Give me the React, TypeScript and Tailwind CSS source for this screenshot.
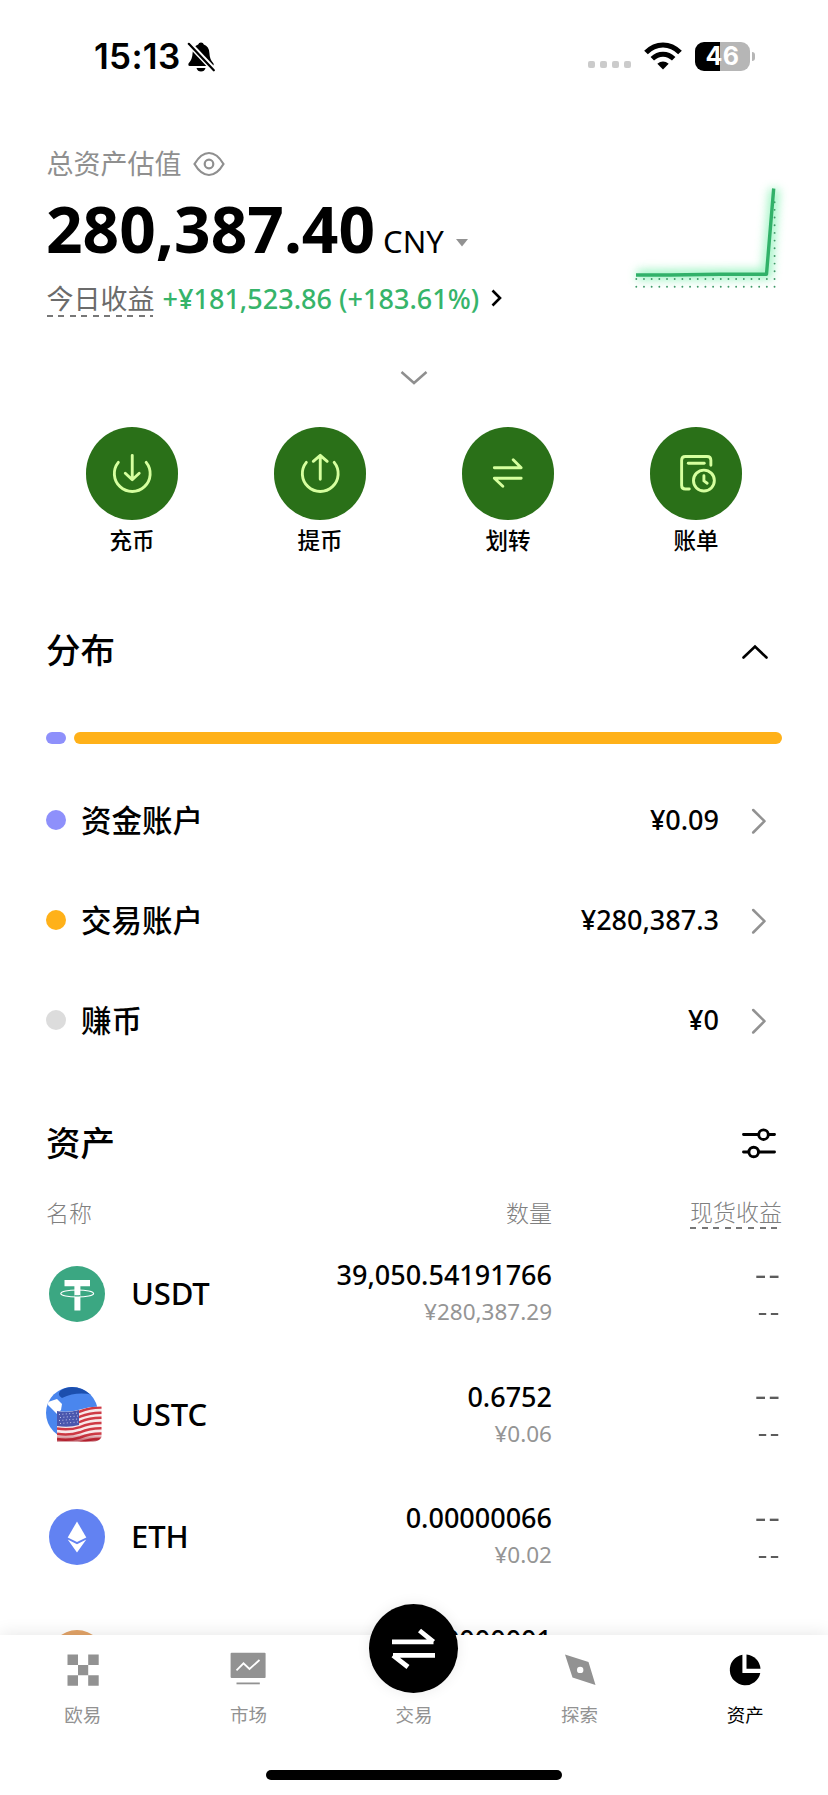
import React from 'react';

interface Account {
  name: string;
  value: string;
  dot: string;
}

interface Asset {
  symbol: string;
  amount: string;
  fiat: string;
  icon: React.ReactNode;
}

const UsdtIcon = () => (
  <svg viewBox="0 0 56 56" className="w-14 h-14">
    <circle cx="28" cy="28" r="28" fill="#3ba782" />
    <path d="M15.5 14H41V20.2H31.4V44.5H25.4V20.2H15.5Z" fill="#fff" />
    <ellipse cx="28.2" cy="27.5" rx="16.4" ry="3.5" fill="none" stroke="#fff" strokeWidth="1.2" />
    <path d="M25.4 29.6Q28.2 30 31.4 29.6" stroke="#3ba782" strokeWidth="1.3" fill="none" />
  </svg>
);

const UstcIcon = () => (
  <svg viewBox="0 0 56 56" className="w-14 h-14 -ml-[2px] -mt-px overflow-visible">
    <defs>
      <clipPath id="globe">
        <circle cx="25" cy="26" r="26" />
      </clipPath>
      <clipPath id="flag">
        <path d="M10 24Q22 26 33 22.500Q44 19 54.500 19.500V50Q52 54.500 46 54.500H10Z" />
      </clipPath>
      <linearGradient id="flagShade" x1="0" y1="0" x2="0" y2="1">
        <stop offset="0.75" stopColor="#a01020" stopOpacity="0" />
        <stop offset="1" stopColor="#a01020" stopOpacity="0.85" />
      </linearGradient>
    </defs>
    <g clipPath="url(#globe)">
      <rect x="-2" y="-1" width="56" height="56" fill="#4a86ee" />
      <path d="M13 4Q20 -2 34 0Q42 2 46 8Q30 4 15 11Q10 9 13 4Z" fill="#1c4fae" />
      <path d="M1 15L10 12L15 17L14 23L10 27L6 23L1 18Z" fill="#fff" />
    </g>
    <g clipPath="url(#flag)">
      <rect x="9" y="18" width="47" height="38" fill="#f8e9ea" />
      <g fill="none" stroke="#cf3a45" strokeWidth="2.5">
        <path d="M10 26Q22 28 33 24.500Q44 20 56 20.500" />
        <path d="M10 31.200Q22 33.200 33 29.700Q44 25.200 56 25.700" />
        <path d="M10 36.400Q22 38.400 33 34.900Q44 30.400 56 30.900" />
        <path d="M10 41.600Q22 43.600 33 40.100Q44 35.600 56 36.100" />
        <path d="M10 46.800Q22 48.800 33 45.300Q44 40.800 56 41.300" />
        <path d="M10 52Q22 54 33 50.500Q44 46 56 46.500" />
        <path d="M10 57Q22 59 33 55.700Q44 51.200 56 51.700" />
      </g>
      <path d="M10 24Q22 26 32 23V38Q22 41 10 39Z" fill="#4a57ae" />
      <g stroke="#c3c8ea" strokeWidth="1" strokeDasharray="1 2.400">
        <path d="M12 27.500L31 26" />
        <path d="M13 30.500L31 29" />
        <path d="M12 33.500L31 32" />
        <path d="M13 36.500L31 35" />
      </g>
      <rect x="9" y="18" width="47" height="38" fill="url(#flagShade)" />
    </g>
  </svg>
);

const EthIcon = () => (
  <svg viewBox="0 0 56 56" className="w-14 h-14">
    <circle cx="28" cy="28" r="28" fill="#6282f2" />
    <path d="M28 12.500L37.300 28.500L28 33L18.700 28.500Z" fill="#fff" />
    <path d="M18.700 30.500L28 35.200L37.300 30.500L28 43.500Z" fill="#fff" />
  </svg>
);

const BtcIcon = () => (
  <svg viewBox="0 0 56 56" className="w-14 h-14">
    <circle cx="28" cy="28" r="28" fill="#e3a468" />
  </svg>
);

const accounts: Account[] = [
  { name: '资金账户', value: '¥0.09', dot: 'bg-[#8e90fb]' },
  { name: '交易账户', value: '¥280,387.3', dot: 'bg-[#ffb119]' },
  { name: '赚币', value: '¥0', dot: 'bg-[#dcdcdc]' },
];

const assets: Asset[] = [
  { symbol: 'USDT', amount: '39,050.54191766', fiat: '¥280,387.29', icon: <UsdtIcon /> },
  { symbol: 'USTC', amount: '0.6752', fiat: '¥0.06', icon: <UstcIcon /> },
  { symbol: 'ETH', amount: '0.00000066', fiat: '¥0.02', icon: <EthIcon /> },
  { symbol: 'BTC', amount: '0.00000001', fiat: '¥0.00', icon: <BtcIcon /> },
];

const actions = [
  {
    label: '充币',
    icon: (
      <>
        <path d="M32.500 35.500A18 18 0 1 0 60.500 35.500" />
        <path d="M46.500 28.500V52.500M39.500 46.500L46.500 53L53.500 46.500" />
      </>
    ),
  },
  {
    label: '提币',
    icon: (
      <>
        <path d="M32.500 35.500A18 18 0 1 0 60.500 35.500" />
        <path d="M46.500 52.500V28.500M39.500 34.500L46.500 28.500L53.500 34.500" />
      </>
    ),
  },
  {
    label: '划转',
    icon: <path d="M32.500 41H59.500L51.500 33M59.500 51.500H32.500L41 59.500" />,
  },
  {
    label: '账单',
    icon: (
      <>
        <path d="M61.200 38.500V33.500Q61.200 29.700 57.400 29.700H35.600Q31.800 29.700 31.800 33.500V58.500Q31.800 62.300 35.600 62.300H39.500" />
        <path d="M38.500 36.500H54.500" />
        <circle cx="54.200" cy="53.800" r="10.500" />
        <path d="M54.200 49V54.200L57.500 56.500" />
      </>
    ),
  },
];

const tabs = [
  {
    label: '欧易',
    icon: (
      <path d="M4.500 4.500H15V15H4.500ZM25.200 4.500H35.700V15H25.200ZM15 15H25.200V25.200H15ZM4.500 25.200H15V35.700H4.500ZM25.200 25.200H35.700V35.700H25.200Z" />
    ),
  },
  {
    label: '市场',
    icon: (
      <>
        <rect x="2.600" y="2.700" width="35" height="25.300" rx="1" />
        <path d="M8.500 20.300L15.500 13.300L21.500 19L31.500 10" fill="none" stroke="#fff" strokeWidth="1.800" />
        <rect x="8.500" y="32.500" width="23.300" height="1.800" />
      </>
    ),
  },
  { label: '交易', icon: null },
  {
    label: '探索',
    icon: (
      <path
        fillRule="evenodd"
        d="M5 4.500L28.500 12L35.500 35L12.500 27.500ZM20.200 16.700A3.200 3.200 0 1 0 20.200 23.100A3.200 3.200 0 1 0 20.200 16.700Z"
      />
    ),
  },
  {
    label: '资产',
    active: true,
    icon: (
      <>
        <path d="M17.400 4.700A15.400 15.400 0 1 0 35.300 23H17.400Z" />
        <path d="M21.500 4.500A15.400 15.400 0 0 1 35.500 18.800H21.500Z" />
      </>
    ),
  },
];

const StatusBar = () => (
  <div className="h-[113px] pl-[94px] pr-[73px] flex items-center">
    <span className="font-['Inter'] font-semibold text-[35px] leading-none tracking-[0.3px]">15:13</span>
    <svg viewBox="0 0 28 30" className="w-7 h-[30px] ml-[6px]">
      <path d="M14 0.500Q16.300 0.500 16.800 2.600Q22 4.300 22.400 11Q22.600 17.500 26.500 21.500Q27.400 23.500 25.500 24H2.500Q0.600 23.500 1.500 21.500Q5.400 17.500 5.600 11Q6 4.300 11.200 2.600Q11.700 0.500 14 0.500Z" />
      <path d="M9.500 26H18.500Q17.500 29.500 14 29.500Q10.500 29.500 9.500 26Z" />
      <path d="M2 1.500L27 28" stroke="#fff" strokeWidth="5.500" />
      <path d="M1.800 1.800L26.800 28.300" stroke="#000" strokeWidth="2.200" strokeLinecap="round" />
    </svg>
    <div className="ml-auto mt-4 flex gap-[5px]">
      <span className="w-[7px] h-[7px] rounded-[2px] bg-[#cbcbcb]" />
      <span className="w-[7px] h-[7px] rounded-[2px] bg-[#cbcbcb]" />
      <span className="w-[7px] h-[7px] rounded-[2px] bg-[#cbcbcb]" />
      <span className="w-[7px] h-[7px] rounded-[2px] bg-[#cbcbcb]" />
    </div>
    <svg viewBox="0 0 38 28" className="w-[38px] h-7 ml-[13px] mb-px">
      <path d="M2 10.500Q9.500 3 19 3Q28.500 3 36 10.500" fill="none" stroke="#000" strokeWidth="5.200" />
      <path d="M8.300 16.800Q13 12.300 19 12.300Q25 12.300 29.700 16.800" fill="none" stroke="#000" strokeWidth="5" />
      <path d="M13.300 21.800Q19 17 24.700 21.800L19 27.500Z" />
    </svg>
    <div className="ml-[13px] mb-px w-[55px] h-[29px] rounded-[9px] bg-[linear-gradient(90deg,#000_46%,#b6b6b6_46%)] flex items-center justify-center font-['Inter'] font-bold text-[25px] leading-none tracking-[0.5px] text-white">
      46
    </div>
    <span className="ml-[2px] w-[3px] h-[9px] rounded-r-full bg-[#b6b6b6]" />
  </div>
);

const TrendChart = () => (
  <svg viewBox="0 0 180 120" className="w-[180px] h-[120px] mt-[31px] -mr-2 shrink-0 overflow-visible">
    <defs>
      <filter id="glow" x="-20%" y="-20%" width="140%" height="140%">
        <feGaussianBlur stdDeviation="5" />
      </filter>
    </defs>
    <path d="M27 99L157 98L164.500 13" fill="none" stroke="#7df0ae" strokeWidth="10" opacity="0.75" filter="url(#glow)" />
    <g stroke="#3f9a68" strokeWidth="1.900" strokeLinecap="round" strokeDasharray="0 7.680">
      <path d="M26.300 103H165" />
      <path d="M26.300 110.700H165" />
      <path d="M164.600 95.300V22" />
    </g>
    <path d="M26 99L60 99L110 98.300L156.500 98.200L163.700 12.500" fill="none" stroke="#31b169" strokeWidth="3.400" strokeLinejoin="round" />
  </svg>
);

const ChevronRight = () => (
  <svg viewBox="0 0 16 28" className="w-4 h-7 ml-8 mr-[15px] mt-[2px]" fill="none" stroke="#929292" strokeWidth="2.500" strokeLinecap="round" strokeLinejoin="round">
    <path d="M2.200 3L13.500 14.200L2.200 25.500" />
  </svg>
);

const TabBar = () => (
  <nav className="absolute inset-x-0 bottom-0 h-40 bg-white shadow-[0_-2px_16px_rgba(0,0,0,0.09)]">
    <div className="grid grid-cols-5">
      {tabs.map((tab) => (
        <div
          key={tab.label}
          className={
            tab.active
              ? 'flex flex-col items-center text-black'
              : 'flex flex-col items-center text-[#929292]'
          }
        >
          {tab.icon ? (
            <svg viewBox="0 0 40 40" className="w-10 h-10 mt-[15px]" fill="currentColor">
              {tab.icon}
            </svg>
          ) : (
            <div className="w-[89px] h-[89px] -mt-[31px] -mb-[3px] rounded-full bg-black shadow-[0_0_14px_rgba(0,0,0,0.08)]">
              <svg viewBox="0 0 89 89" className="w-full h-full" fill="none" stroke="#fff" strokeWidth="4.800" strokeLinejoin="bevel">
                <path d="M23 37.800H64.500M64.500 37.800L50.500 26.500" />
                <path d="M66 51.300H24M24 51.300L39 63" />
              </svg>
            </div>
          )}
          <span className="mt-[15px] text-[18.500px] leading-[20px]">{tab.label}</span>
        </div>
      ))}
    </div>
    <div className="mx-auto mt-[45px] w-[296px] h-[10px] rounded-full bg-black" />
  </nav>
);

export default function App() {
  return (
    <div className="relative w-[828px] h-[1795px] overflow-hidden bg-white text-black font-['Noto_Sans','Noto_Sans_CJK_SC',sans-serif]">
      <StatusBar />

      {/* Balance summary */}
      <section className="px-[46px] pt-8 flex justify-between">
        <div>
          <div className="h-9 flex items-center text-[#8f8f8f]">
            <span className="ml-[0.5px] text-[27px] leading-none">总资产估值</span>
            <svg viewBox="0 0 32 26" className="w-8 h-[26px] ml-[11px] mt-px" fill="none" stroke="currentColor" strokeWidth="2.200">
              <path d="M1.500 13Q8 2 16 2Q24 2 30.500 13Q24 24 16 24Q8 24 1.500 13Z" />
              <circle cx="16" cy="13" r="4.300" />
            </svg>
          </div>
          <div className="h-[97px] flex items-center">
            <span className="-mt-[2px] font-bold text-[64px] leading-none">280,387.40</span>
            <span className="ml-2 mt-6 text-[31px] leading-none">CNY</span>
            <svg viewBox="0 0 12 8" className="w-3 h-2 ml-3 mt-[26px]">
              <path d="M0 0H12L6 7.500Z" fill="#929292" />
            </svg>
          </div>
          <div className="h-[42px] -mt-px mb-px flex items-center">
            <span className="relative ml-[0.5px] text-[27px] leading-none text-[#6b6b6b]">
              今日收益
              <span className="absolute left-0 -bottom-[5px] w-[106px] h-[2px] bg-[repeating-linear-gradient(90deg,#777_0_6px,transparent_6px_11.500px)]" />
            </span>
            <span className="ml-2 text-[27px] leading-none font-medium tracking-[0.03px] text-[#36b46a]">+¥181,523.86 (+183.61%)</span>
            <svg viewBox="0 0 11 18" className="w-[11px] h-[18px] ml-[12px]" fill="none" stroke="#000" strokeWidth="2.600">
              <path d="M1.500 1.500L9 9L1.500 16.500" />
            </svg>
          </div>
        </div>
        <TrendChart />
      </section>

      <div className="h-[107px] pt-[50px] flex justify-center">
        <svg viewBox="0 0 28 16" className="w-7 h-4" fill="none" stroke="#8f8f8f" strokeWidth="2.500">
          <path d="M1.500 2L14 13L26.500 2" />
        </svg>
      </div>

      {/* Quick actions */}
      <section className="px-[38px] grid grid-cols-4">
        {actions.map((action) => (
          <div key={action.label} className="flex flex-col items-center">
            <div className="w-[92.5px] h-[92.5px] rounded-full bg-[#2a7018]">
              <svg viewBox="0 0 93 93" className="w-full h-full" fill="none" stroke="#d6ff9f" strokeWidth="2.900" strokeLinecap="round" strokeLinejoin="round">
                {action.icon}
              </svg>
            </div>
            <span className="h-[42.5px] flex items-center text-[22.500px] leading-none font-medium">{action.label}</span>
          </div>
        ))}
      </section>

      {/* Distribution */}
      <section className="px-[46px] mt-[60px]">
        <div className="h-14 flex items-center justify-between">
          <h2 className="text-[34.5px] leading-none font-medium">分布</h2>
          <svg viewBox="0 0 28 16" className="w-7 h-4 mr-[13px] mt-[4px]" fill="none" stroke="#000" strokeWidth="2.600" strokeLinecap="round">
            <path d="M2.500 13.500L14 2.500L25.500 13.500" />
          </svg>
        </div>
        <div className="mt-[54px] flex gap-2">
          <span className="w-5 h-[12px] rounded-full bg-[#8e90fb]" />
          <span className="flex-1 h-[12px] rounded-full bg-[#ffb119]" />
        </div>
        <div className="mt-[26px]">
          {accounts.map((account) => (
            <div key={account.name} className="h-[100px] flex items-center">
              <span className={`w-5 h-5 rounded-full ${account.dot}`} />
              <span className="ml-[15px] text-[30.500px] leading-none font-medium">{account.name}</span>
              <span className="ml-auto -mt-[2px] text-[27px] leading-none font-medium">{account.value}</span>
              <ChevronRight />
            </div>
          ))}
        </div>
      </section>

      {/* Assets */}
      <section className="px-[46px] mt-[45px]">
        <div className="h-14 flex items-center justify-between">
          <h2 className="text-[34.5px] leading-none font-medium">资产</h2>
          <svg viewBox="0 0 34 32" className="w-[34px] h-8 mr-[6px]" fill="#fff" stroke="#000" strokeWidth="2.900" strokeLinecap="round">
            <path d="M1.500 7.500H32.500M1.500 25H32.500" />
            <circle cx="21.500" cy="7.700" r="4.800" />
            <circle cx="11.700" cy="25" r="4.800" />
          </svg>
        </div>
        <div className="h-[62px] pt-[22px] flex items-center text-[23px] leading-none text-[#808080] font-light">
          <span>名称</span>
          <span className="ml-auto">数量</span>
          <span className="relative ml-[138px] -mt-[2px]">
            现货收益
            <span className="absolute left-0 -bottom-[5px] w-[88px] h-[2px] bg-[repeating-linear-gradient(90deg,#777_0_6px,transparent_6px_11.600px)]" />
          </span>
        </div>
        {assets.map((asset) => (
          <div key={asset.symbol} className="h-[121.5px] flex items-center">
            <div className="w-[85px] pl-[3px]">{asset.icon}</div>
            <span className="-mt-px text-[31px] leading-none font-medium tracking-[-0.1px]">{asset.symbol}</span>
            <div className="ml-auto -mt-px text-right flex flex-col">
              <span className="h-[37px] text-[27px] leading-[37px] font-medium">{asset.amount}</span>
              <span className="h-[37px] text-[22.500px] leading-[37px] text-[#959595]">{asset.fiat}</span>
            </div>
            <div className="w-[230px] -mt-[2px] flex flex-col items-end text-[#5c5c5c]">
              <span className="h-[37px] text-[26px] leading-[37px] font-medium tracking-[1.7px] origin-right scale-x-[1.35]">--</span>
              <span className="h-[37px] text-[22px] leading-[37px] font-medium tracking-[1.7px] origin-right scale-x-[1.35]">--</span>
            </div>
          </div>
        ))}
      </section>

      <TabBar />
    </div>
  );
}
